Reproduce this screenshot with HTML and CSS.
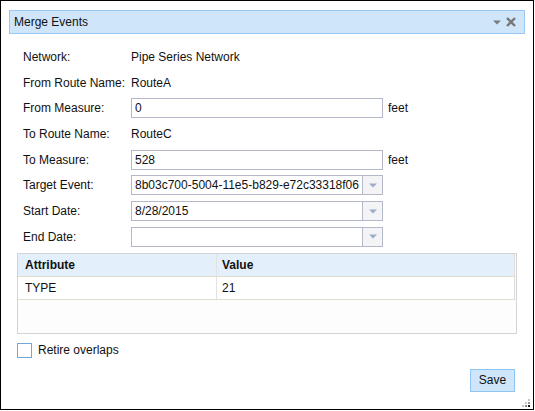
FILE: index.html
```html
<!DOCTYPE html>
<html>
<head>
<meta charset="utf-8">
<link rel="stylesheet" href="styles.css">
</head>
<body>
<div class="dialog">
  <div class="titlebar">
    <span class="title">Merge Events</span>
    <span class="tools">
      <svg class="caret" width="8" height="5" viewBox="0 0 8 5"><path d="M0 0.5H8L4 4.5Z" fill="#7a7a7a"/></svg>
      <svg class="close" width="10" height="10" viewBox="0 0 10 10"><path d="M1 1L9 9M9 1L1 9" stroke="#777" stroke-width="2.4" stroke-linecap="butt"/></svg>
    </span>
  </div>
  <div class="body">
    <div class="form">
      <div class="row"><span class="label">Network:</span><span class="value">Pipe Series Network</span></div>
      <div class="row"><span class="label">From Route Name:</span><span class="value">RouteA</span></div>
      <div class="row"><span class="label">From Measure:</span><span class="field">0</span><span class="unit">feet</span></div>
      <div class="row"><span class="label">To Route Name:</span><span class="value">RouteC</span></div>
      <div class="row"><span class="label">To Measure:</span><span class="field">528</span><span class="unit">feet</span></div>
      <div class="row"><span class="label">Target Event:</span><span class="combo"><span class="combo-text">8b03c700-5004-11e5-b829-e72c33318f06</span><span class="combo-btn"><svg width="8" height="5" viewBox="0 0 8 5"><path d="M0 0.5H8L4 4.5Z" fill="#9cadc9"/></svg></span></span></div>
      <div class="row"><span class="label">Start Date:</span><span class="combo"><span class="combo-text">8/28/2015</span><span class="combo-btn"><svg width="8" height="5" viewBox="0 0 8 5"><path d="M0 0.5H8L4 4.5Z" fill="#9cadc9"/></svg></span></span></div>
      <div class="row"><span class="label">End Date:</span><span class="combo"><span class="combo-text"></span><span class="combo-btn"><svg width="8" height="5" viewBox="0 0 8 5"><path d="M0 0.5H8L4 4.5Z" fill="#9cadc9"/></svg></span></span></div>
    </div>
    <div class="grid">
      <div class="grid-head">
        <div class="cell c1">Attribute</div>
        <div class="cell c2">Value</div>
      </div>
      <div class="grid-row">
        <div class="cell c1">TYPE</div>
        <div class="cell c2">21</div>
      </div>
    </div>
    <label class="check"><span class="box"></span><span>Retire overlaps</span></label>
    <div class="actions"><button class="save">Save</button></div>
  </div>
  <svg class="grip" width="10" height="10" viewBox="0 0 10 10">
    <rect x="7" y="1" width="2" height="2" fill="#c8c8c8"/>
    <rect x="4" y="4" width="2" height="2" fill="#c8c8c8"/>
    <rect x="7" y="4" width="2" height="2" fill="#999"/>
    <rect x="1" y="7" width="2" height="2" fill="#c8c8c8"/>
    <rect x="4" y="7" width="2" height="2" fill="#888"/>
    <rect x="7" y="7" width="2" height="2" fill="#222"/>
  </svg>
</div>
</body>
</html>
```

FILE: styles.css
```css
* { box-sizing: border-box; }
html, body { margin: 0; padding: 0; background: #fff; }
body {
  font-family: "Liberation Sans", Arial, sans-serif;
  font-size: 12px;
  color: #111;
}
.dialog {
  position: relative;
  width: 534px;
  height: 410px;
  border: 1px solid #000;
  padding: 9px 8px 0 8px;
  background: #fff;
}
.titlebar {
  height: 24px;
  background: #cfe5fa;
  border: 1px solid #99c9f3;
  display: flex;
  align-items: center;
  justify-content: space-between;
  padding: 0 8px 0 4px;
}
.title { color: #111; font-size: 12px; }
.tools { display: flex; align-items: center; gap: 5px; }
.tools .caret { margin-top: 1px; }
.body {
  padding: 13px 8px 0 8px;
}
.form {
  display: flex;
  flex-direction: column;
  gap: 5.7px;
}
.row {
  height: 20px;
  display: flex;
  align-items: center;
}
.label {
  width: 114px;
  padding-left: 6px;
  flex: none;
}
.field, .combo {
  width: 252px;
  height: 20px;
  border: 1px solid #b5b8c8;
  background: #fff;
  display: flex;
  align-items: center;
}
.field { padding-left: 3px; }
.unit { margin-left: 5px; }
.combo-text { flex: 1; padding-left: 3px; white-space: nowrap; overflow: hidden; }
.combo-btn {
  width: 20px;
  height: 100%;
  border-left: 1px solid #b5b8c8;
  background: #f4f4f6;
  display: flex;
  align-items: center;
  justify-content: center;
  flex: none;
}
.grid {
  margin-top: 6px;
  width: 500px;
  height: 81px;
  border: 1px solid #d4d4d4;
  background: #fdfdfd;
}
.grid-head, .grid-row {
  display: flex;
  height: 23px;
  margin-right: 1px;
  border-right: 1px solid #dcdcdc;
}
.grid-head {
  background: #e3f0fb;
  font-weight: bold;
  border-bottom: 1px solid #e2dccf;
}
.grid-row {
  height: 23px;
  background: #fff;
  border-bottom: 1px solid #e2dccf;
}
.cell {
  display: flex;
  align-items: center;
  padding-left: 7px;
}
.c1 { width: 199px; border-right: 1px solid #e2e2e2; }
.c2 { flex: 1; padding-left: 5px; }
.check {
  margin-top: 9px;
  display: flex;
  align-items: center;
  gap: 6px;
  height: 15px;
}
.box {
  width: 15px;
  height: 15px;
  border: 1px solid #6fa9dc;
  background: #fff;
  flex: none;
}
.actions {
  margin-top: 11px;
  display: flex;
  justify-content: flex-end;
  padding-right: 2px;
}
.save {
  width: 45px;
  height: 23px;
  background: #cfe5fa;
  border: 1px solid #8ec5f3;
  font-family: "Liberation Sans", Arial, sans-serif;
  font-size: 12px;
  color: #111;
  padding: 0;
}
.grip {
  position: absolute;
  right: 2px;
  bottom: 1px;
}
```
